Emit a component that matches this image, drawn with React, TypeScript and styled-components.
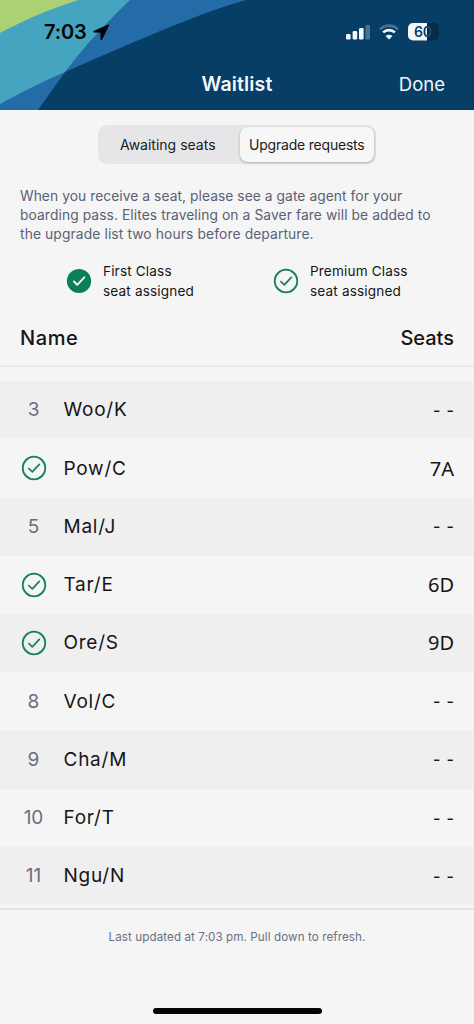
import React from "react";
import styled, { createGlobalStyle } from "styled-components";

const GlobalStyle = createGlobalStyle`
  * { box-sizing: border-box; }
  body {
    margin: 0;
    background: #f5f5f5;
    color: #151517;
    font-family: Inter, "Liberation Sans", sans-serif;
  }
`;

const Screen = styled.div`
  width: 474px;
  height: 1024px;
  display: flex;
  flex-direction: column;
  background: #f5f5f5;
  overflow: hidden;
`;

const Header = styled.header`
  position: relative;
  height: 110px;
  flex: none;
  background: #073e66;
  overflow: hidden;
`;

const HeaderArt = styled.svg`
  position: absolute;
  inset: 0;
`;

const StatusBar = styled.div`
  position: relative;
  height: 58px;
  padding: 6px 32px 0 44px;
  display: flex;
  align-items: center;
  justify-content: space-between;
`;

const Clock = styled.div`
  display: flex;
  align-items: center;
  gap: 6px;
  color: #050505;
  font-size: 20px;
  font-weight: 600;
  letter-spacing: -0.1px;
`;

const StatusIcons = styled.div`
  display: flex;
  align-items: center;
  gap: 9px;
`;

const TitleBar = styled.div`
  position: relative;
  height: 52px;
  padding: 0 29px;
  display: grid;
  grid-template-columns: 1fr auto 1fr;
  align-items: center;
  color: #f3f8ff;
`;

const Title = styled.h1`
  grid-column: 2;
  margin: 0;
  font-size: 19.5px;
  font-weight: 600;
  letter-spacing: 0.15px;
`;

const DoneButton = styled.button`
  justify-self: end;
  padding: 0;
  border: 0;
  background: none;
  color: inherit;
  font: 400 18.5px Inter, sans-serif;
`;

const Segments = styled.div`
  width: 278px;
  height: 39px;
  margin: 15px auto 0 98px;
  padding: 2px;
  flex: none;
  display: grid;
  grid-template-columns: 139.5px 1fr;
  border-radius: 9px;
  background: #e6e6e8;
`;

const Segment = styled.button<{ $active?: boolean }>`
  padding: ${(p) => (p.$active ? "0" : "0 4px 0 0")};
  border: 0;
  border-radius: 8px;
  background: ${(p) => (p.$active ? "#f7f7f7" : "transparent")};
  box-shadow: ${(p) => (p.$active ? "0 1px 3px rgba(0, 0, 0, 0.25)" : "none")};
  color: #1b1b1d;
  font: 400 14px Inter, sans-serif;
  letter-spacing: ${(p) => (p.$active ? -0.2 : 0)}px;
  white-space: nowrap;
`;

const Notice = styled.p`
  margin: 22.5px 0 0 20px;
  color: #596174;
  font-size: 13.8px;
  line-height: 19.4px;
  white-space: nowrap;
`;

const NoticeLine = styled.span<{ $spacing: number }>`
  display: block;
  letter-spacing: ${(p) => p.$spacing}px;
`;

const Legend = styled.div`
  margin-top: 17.5px;
  padding-left: 66px;
  display: grid;
  grid-template-columns: 207px 1fr;
`;

const LegendItem = styled.div`
  display: flex;
  align-items: center;
  gap: 11px;
  font-size: 13.6px;
  line-height: 19.4px;
  letter-spacing: 0.15px;

  svg {
    margin-top: -1px;
  }
`;

const ListHeader = styled.div`
  height: 66px;
  padding: 9px 20px 0;
  display: flex;
  align-items: center;
  justify-content: space-between;
  border-bottom: 2px solid #e8e8e9;
  font-size: 20px;
  font-weight: 500;
`;

const HeaderCell = styled.span<{ $spacing: number }>`
  letter-spacing: ${(p) => p.$spacing}px;
`;

const List = styled.ul`
  margin: 0;
  padding: 14px 0 3px;
  list-style: none;
  border-bottom: 2px solid #e4e4e5;
`;

const Row = styled.li`
  height: 58.25px;
  padding: 0 20px 0.5px 16px;
  display: grid;
  grid-template-columns: 35px 1fr auto;
  column-gap: 12.5px;
  align-items: center;
  font-size: 19px;

  &:nth-child(odd) {
    background: #efefef;
  }
`;

const Position = styled.span`
  display: flex;
  justify-content: center;
  color: #686d82;
`;

const Name = styled.span`
  letter-spacing: 0.75px;
`;

const Seat = styled.span<{ $pending: boolean }>`
  font-family: ${(p) => (p.$pending ? "Inter" : '"Noto Sans"')}, sans-serif;
  font-size: ${(p) => (p.$pending ? 16 : 20)}px;
  font-weight: ${(p) => (p.$pending ? 500 : 400)};
  word-spacing: ${(p) => (p.$pending ? 2 : 0)}px;
`;

const Footer = styled.footer`
  padding-top: 18px;
  text-align: center;
  color: #6a7080;
  font-size: 11.6px;
  line-height: 18px;
  letter-spacing: 0.1px;
`;

const HomeIndicator = styled.div`
  width: 169px;
  height: 6px;
  margin: auto auto 10px;
  flex: none;
  border-radius: 3px;
  background: #050505;
`;

const AssignedIcon = ({ filled = false }: { filled?: boolean }) => (
  <svg width="26" height="26" viewBox="0 0 26 26" fill="none">
    <circle cx="13" cy="13" r={filled ? 12.1 : 11.3} fill={filled ? "#087f57" : "none"} stroke={filled ? "none" : "#178158"} strokeWidth="1.8" />
    <path d="M7.9 13.5 11.3 16.8 18.3 9.3" stroke={filled ? "#f5f5f5" : "#178158"} strokeWidth={filled ? 1.9 : 1.7} strokeLinecap="round" strokeLinejoin="round" />
  </svg>
);

const entries = [
  { position: 3, name: "Woo/K" },
  { position: 4, name: "Pow/C", seat: "7A" },
  { position: 5, name: "Mal/J" },
  { position: 6, name: "Tar/E", seat: "6D" },
  { position: 7, name: "Ore/S", seat: "9D" },
  { position: 8, name: "Vol/C" },
  { position: 9, name: "Cha/M" },
  { position: 10, name: "For/T" },
  { position: 11, name: "Ngu/N" },
];

export default function App() {
  return (
    <Screen>
      <GlobalStyle />
      <Header>
        <HeaderArt width="474" height="110" viewBox="0 0 474 110">
          <path d="M0 0H246C200 13 150 35 65 72L38 110H0Z" fill="#246ca8" />
          <path d="M0 0H130C108 21 86 44 65 72C40 83 20 93 0 104Z" fill="#45a4c0" />
          <path d="M0 0H78C50 9 24 20 0 33Z" fill="#acd174" />
        </HeaderArt>
        <StatusBar>
          <Clock>
            7:03
            <svg width="17" height="17" viewBox="0 0 17 17">
              <path d="M15.4.5.9 6.8C-.2 7.4.1 8.6 1.3 8.6L7.4 8.7 7.5 14.9C7.5 16.3 8.9 16.5 9.4 15.3L16 1.6C16.4.7 16 .2 15.4.5Z" fill="#050505" />
            </svg>
          </Clock>
          <StatusIcons>
            <svg width="24" height="16" viewBox="0 0 24 16" fill="#f3f8ff">
              <rect x="0" y="10" width="4.6" height="5.5" rx="1.2" />
              <rect x="6.6" y="7" width="4.6" height="8.5" rx="1.2" />
              <rect x="13" y="4" width="4.6" height="11.5" rx="1.2" />
              <rect x="19.4" y="1" width="4.6" height="14.5" rx="1.2" opacity=".28" />
            </svg>
            <svg width="20" height="16" viewBox="0 0 20 16" fill="none">
              <path d="M1 5.2C6.2.4 13.8.4 19 5.2" stroke="#f3f8ff" strokeWidth="2.6" opacity=".28" />
              <path d="M4.1 8.4C7.5 5.3 12.5 5.3 15.9 8.4" stroke="#f3f8ff" strokeWidth="2.6" />
              <path d="M6.6 11.9C8.5 10.2 11.5 10.2 13.4 11.9L10 15.4Z" fill="#f3f8ff" />
            </svg>
            <svg width="34" height="18" viewBox="0 0 34 18">
              <defs>
                <clipPath id="charged"><rect width="19" height="18" /></clipPath>
                <clipPath id="drained"><rect x="19" width="15" height="18" /></clipPath>
              </defs>
              <rect width="31" height="17.5" rx="5" fill="#062c4b" />
              <path d="M32 6.2Q34 8.7 32 11.2Z" fill="#062c4b" />
              <rect width="31" height="17.5" rx="5" fill="#f3f8ff" clipPath="url(#charged)" />
              <g fontFamily="Inter, sans-serif" fontSize="14" fontWeight="600" textAnchor="middle">
                <text x="15" y="14" fill="#073e66" clipPath="url(#charged)">60</text>
                <text x="15" y="14" fill="#23476a" clipPath="url(#drained)">60</text>
              </g>
            </svg>
          </StatusIcons>
        </StatusBar>
        <TitleBar>
          <Title>Waitlist</Title>
          <DoneButton>Done</DoneButton>
        </TitleBar>
      </Header>

      <Segments>
        <Segment>Awaiting seats</Segment>
        <Segment $active>Upgrade requests</Segment>
      </Segments>

      <Notice>
        <NoticeLine $spacing={0.06}>When you receive a seat, please see a gate agent for your</NoticeLine>
        <NoticeLine $spacing={0.09}>boarding pass. Elites traveling on a Saver fare will be added to</NoticeLine>
        <NoticeLine $spacing={0.12}>the upgrade list two hours before departure.</NoticeLine>
      </Notice>

      <Legend>
        <LegendItem>
          <AssignedIcon filled />
          <span>First Class<br />seat assigned</span>
        </LegendItem>
        <LegendItem>
          <AssignedIcon />
          <span>Premium Class<br />seat assigned</span>
        </LegendItem>
      </Legend>

      <ListHeader>
        <HeaderCell $spacing={0.6}>Name</HeaderCell>
        <HeaderCell $spacing={0}>Seats</HeaderCell>
      </ListHeader>

      <List>
        {entries.map(({ position, name, seat }) => (
          <Row key={position}>
            <Position>{seat ? <AssignedIcon /> : position}</Position>
            <Name>{name}</Name>
            <Seat $pending={!seat}>{seat ?? "- -"}</Seat>
          </Row>
        ))}
      </List>

      <Footer>Last updated at 7:03 pm. Pull down to refresh.</Footer>
      <HomeIndicator />
    </Screen>
  );
}
